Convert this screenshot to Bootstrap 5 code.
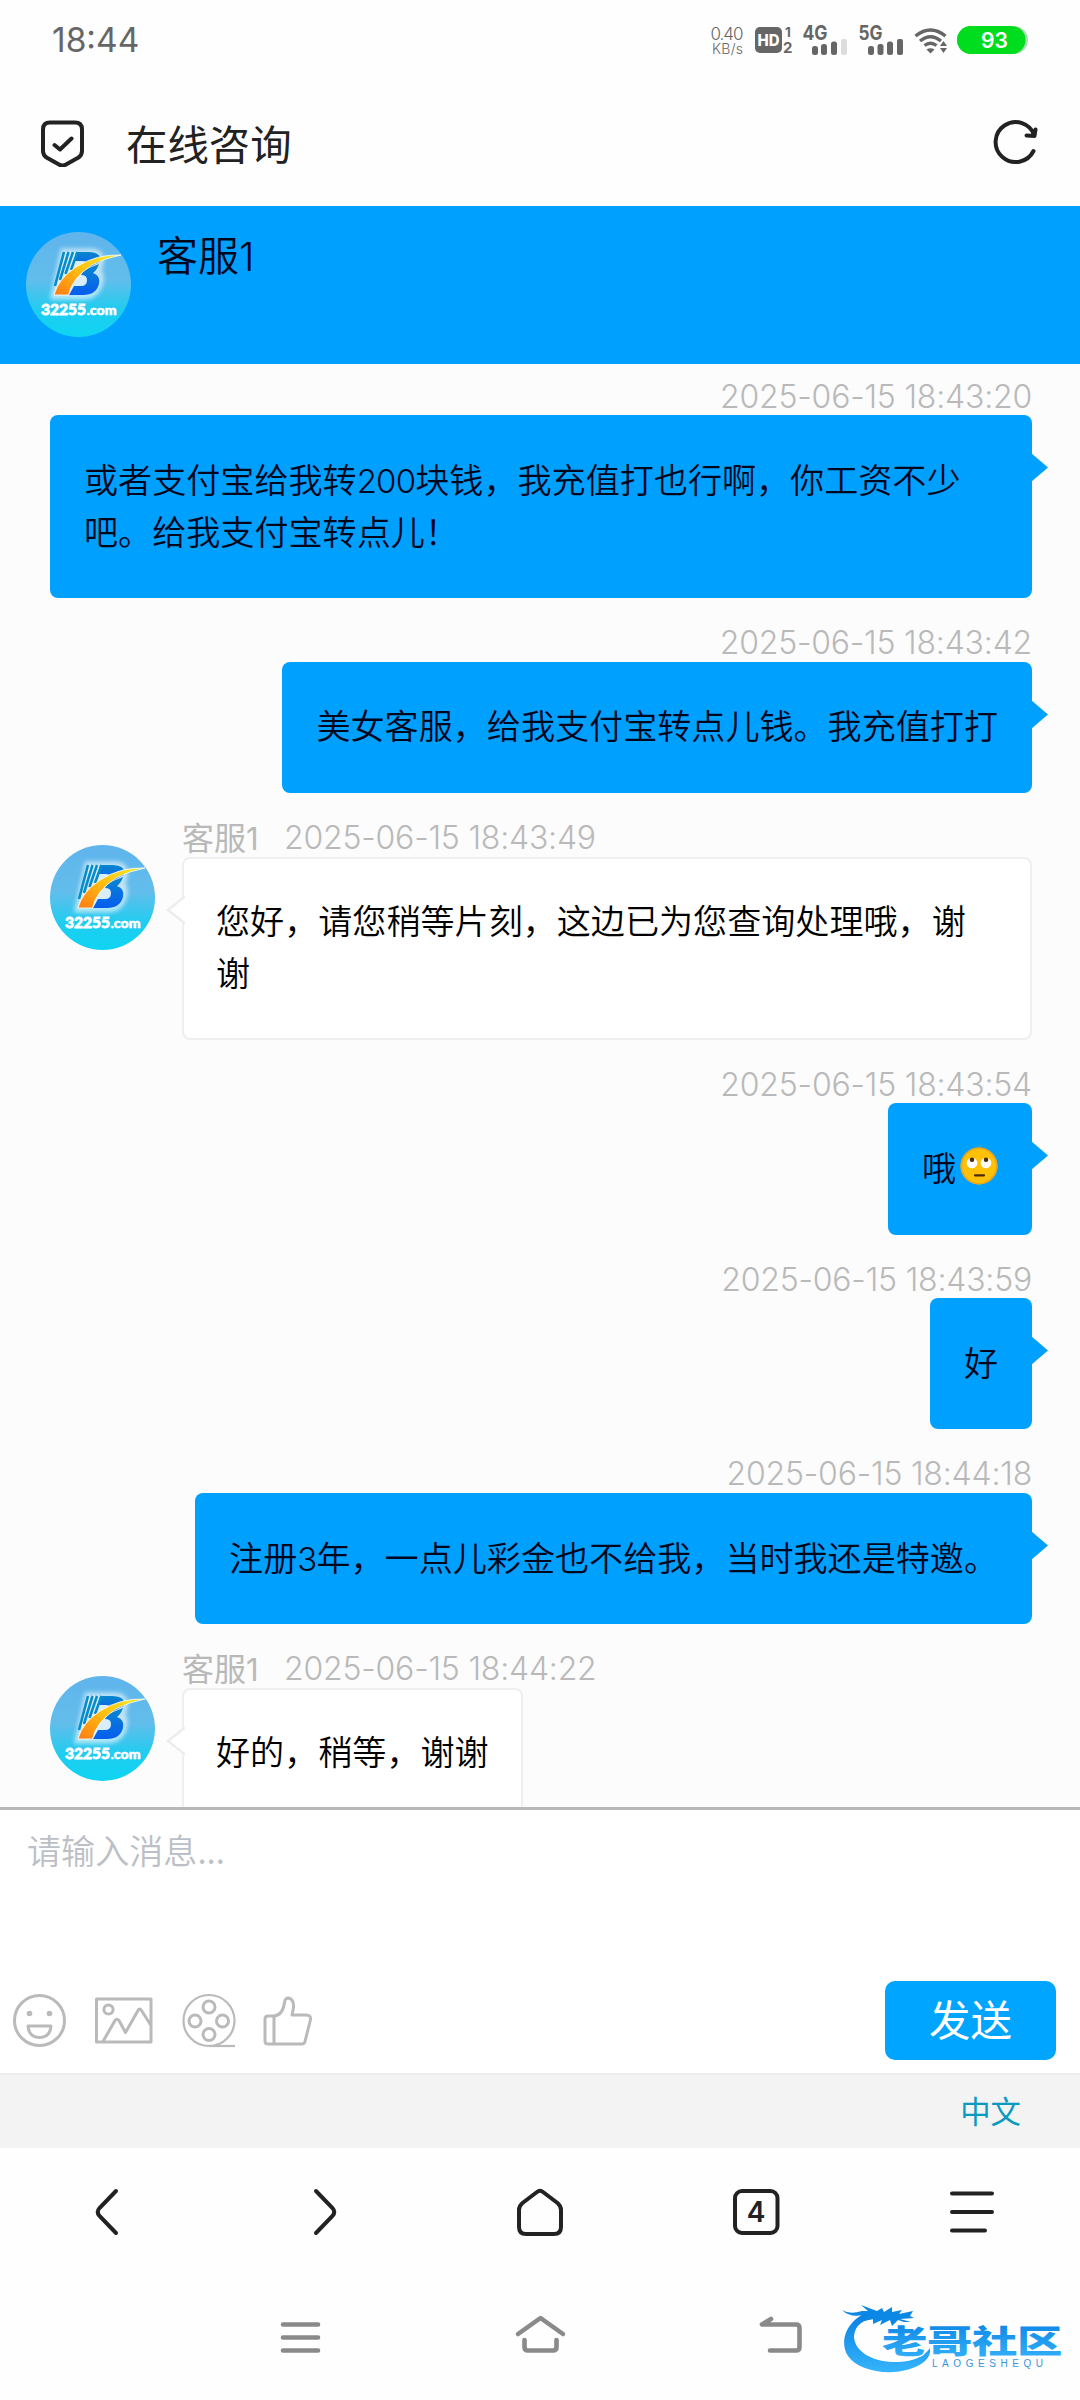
<!DOCTYPE html>
<html lang="zh-CN">
<head>
<meta charset="utf-8">
<meta name="viewport" content="width=device-width, initial-scale=1">
<title>在线咨询</title>
<link href="https://cdn.jsdelivr.net/npm/bootstrap@5.3.0/dist/css/bootstrap.min.css" rel="stylesheet">
<style>
  body{font-family:"Noto Sans CJK SC",sans-serif;color:#000;background:#fefefe;font-size:34.1px;line-height:52px;font-weight:350}
  .screen{width:1080px;height:2400px;overflow:hidden}
  svg{display:block;flex:none}
  .status{height:80px;padding:0 52px 0 52px;color:#666}
  .clock{font:400 33.5px/40px Inter,sans-serif}
  .titlebar{height:126px;padding:0 41px 2px 40px;color:#222}
  .titlebar .page-name{font-size:41.4px;font-weight:400;margin-left:41px;margin-top:-1px}
  .agent{height:158px;background:#00a0ff;padding:26px}
  .agent .agent-name{font-size:41px;line-height:43px;margin-left:26px;color:#00061c}
  .agent-name .num{font-size:39px}
  .chat{height:1443px;background:#fcfcfc;overflow:hidden}
  .meta{height:63.6px;color:#b9b9b9;font-size:32px;line-height:38px;padding-top:26px}
  .meta.first{height:51px;padding-top:14px}
  .stamp{font-family:Inter,"Noto Sans CJK SC",sans-serif;font-size:32px;font-weight:350;letter-spacing:-.2px}
  .meta .agent-tag{margin-top:-2px;width:102px;font-weight:400}
  .agent-tag .num{font-size:31px}
  .msg-out{padding-right:48px}
  .msg-in{padding:0 48px 0 50px}
  .bubble{position:relative;border-radius:8px;padding:36.600px 34px 42.600px;white-space:nowrap}
  .bubble-wide{width:982px}
  .bubble-out{background:#00a0ff;color:#00061c}
  .bubble-in{background:#fff;border:2px solid #efefef;padding:34.600px 32px 40.600px}
  .tail{position:absolute;top:38px}
  .bubble-out .tail{left:100%;margin-left:-1px}
  .bubble-in .tail{right:100%;margin-right:-1px;top:36px}
  .num{font-family:Inter,sans-serif;font-size:33px;line-height:1;letter-spacing:-.8px}
  .face-pic{margin-top:52px;margin-right:27px}
  .composer{height:266px;background:#fff;border-top:3px solid #b7b7b7}
  .composer .hint{color:#bcbfc6;padding:13px 27px 0;height:171px}
  .tools{height:79px;padding:0 24px 0 13px}
  .send{width:171px;height:79px;background:#00a5ff;border:0;border-radius:10px;color:#fff;font-size:41.5px;line-height:74px;padding:0 0 5px;font-weight:400}
  .lang{height:75px;background:#f3f3f3;color:#0a9ac0;font-size:30.4px;padding:0 59px 4px 0;border-top:2px solid #ececec;font-weight:400}
  .browser-nav{height:127px}
  .browser-nav>div{width:216px}
  .sys-nav{height:125px;position:relative}
  .brand{position:absolute;left:836px;top:21px}
</style>
</head>
<body>
<svg width="0" height="0" class="position-absolute">
  <defs>
    <linearGradient id="sky" x1="0" y1="0" x2="0" y2="1"><stop offset="0" stop-color="#5fb4ec"/><stop offset=".45" stop-color="#62bdeb"/><stop offset=".75" stop-color="#1ecdf0"/><stop offset="1" stop-color="#0fd4f2"/></linearGradient>
    <linearGradient id="flame" x1="1" y1="0" x2="0" y2="1"><stop offset="0" stop-color="#f2ee2a"/><stop offset=".45" stop-color="#ffc411"/><stop offset="1" stop-color="#ff7a12"/></linearGradient>
    <linearGradient id="bee" x1="0" y1="0" x2="0" y2="1"><stop offset="0" stop-color="#0a86cf"/><stop offset="1" stop-color="#065df0"/></linearGradient>
    <linearGradient id="wave" x1="0" y1="0" x2="0" y2="1"><stop offset="0" stop-color="#087fe2"/><stop offset="1" stop-color="#35b4fb"/></linearGradient>
    <filter id="glow" x="-30%" y="-30%" width="160%" height="160%"><feGaussianBlur stdDeviation="2.2"/></filter>
    <symbol id="logo" viewBox="0 0 105 105">
      <circle cx="52.500" cy="52.500" r="52.500" fill="url(#sky)"/>
      <path d="M37 19h28q12 0 10 12l-2 8q4 6 1 14-4 12-16 12H27z" fill="#fff" stroke="#fff" stroke-width="5" opacity=".6" filter="url(#glow)"/>
      <path d="M37 20h24q13 0 12 9-1 9-7 12 7 3 5 11-3 11-15 11H28z" fill="#d8eefb"/>
      <path d="M50 20h12q14 0 12 10l-12 6q1-7-6-7H48z" fill="url(#bee)"/>
      <path d="M63 36l10-4q-2 6-6 9 8 3 6 11-3 11-16 11H43l5-9h7q6 0 6-6 0-5-6-5l3-5z" fill="url(#bee)"/>
      <g stroke="#078bc9" stroke-width="2.600"><path d="M38 20L29 54M42.500 20L34 48M47 20L39.500 42M51.500 20L45 38"/></g>
      <path d="M95 23Q70 22 50 35 32 47 28 63H42.500Q46 46 66 33 79 26 95 23z" fill="url(#flame)" stroke="#fff" stroke-width=".8"/>
      <text x="15" y="83" font-family="Lato" font-weight="900" font-size="15.500" fill="#fff" stroke="#fff" stroke-width=".8" textLength="45" lengthAdjust="spacingAndGlyphs">32255</text>
      <text x="60.500" y="83" font-family="Lato" font-weight="900" font-size="13" fill="#fff" stroke="#fff" stroke-width=".5" textLength="30" lengthAdjust="spacingAndGlyphs">.com</text>
    </symbol>
    <symbol id="tail-out" viewBox="0 0 17 30"><path d="M0 0L17 14.500 0 29z" fill="#00a0ff"/></symbol>
    <symbol id="tail-in" viewBox="0 0 20 30"><path d="M20 1.500L3 15 20 28.500" fill="#fff" stroke="#ededed" stroke-width="2.500"/></symbol>
  </defs>
</svg>

<div class="screen d-flex flex-column">
  <div class="status d-flex align-items-center justify-content-between">
    <span class="clock">18:44</span>
    <svg width="320" height="40" viewBox="708 20 320 40" fill="#666" font-family="Inter,sans-serif">
      <text x="710.500" y="40" font-size="17" textLength="33">0.40</text>
      <text x="712" y="54" font-size="14" textLength="31">KB/s</text>
      <rect x="755" y="27" width="27" height="26" rx="5"/>
      <text x="757.500" y="46" font-size="16" font-weight="800" fill="#fff" textLength="22" lengthAdjust="spacingAndGlyphs">HD</text>
      <text x="785" y="37" font-size="13.500" font-weight="700">1</text>
      <text x="783" y="52.500" font-size="15" font-weight="700">2</text>
      <text x="802.500" y="39.500" font-size="20" font-weight="700" textLength="25" lengthAdjust="spacingAndGlyphs">4G</text>
      <text x="858.500" y="39.500" font-size="20" font-weight="700" textLength="24" lengthAdjust="spacingAndGlyphs">5G</text>
      <rect x="812" y="46" width="6" height="9" rx="2.500"/><rect x="821" y="44" width="6" height="11" rx="2.500"/><rect x="831" y="41.500" width="6" height="13.500" rx="2.500"/><rect x="841" y="39" width="6" height="16" rx="2" fill="#ddd"/>
      <rect x="868" y="46" width="6" height="9" rx="2.500"/><rect x="877.500" y="44" width="6" height="11" rx="2.500"/><rect x="887" y="41.500" width="6" height="13.500" rx="2.500"/><rect x="897" y="39" width="6" height="16" rx="2"/>
      <g fill="none" stroke="#666" stroke-width="3.400"><path d="M915.500 36Q930.500 24 945.500 36M920 41Q930.500 32.500 941 41M924.500 45.500Q930.500 41 936.500 45.500"/></g>
      <path d="M926.500 49.500q4-2.500 8 0l-4 4zM943.500 41l3.500 5h-7zM943.500 53l3.500-5h-7z"/>
      <rect x="957" y="26" width="71" height="28" rx="14" fill="#a9dcae"/><rect x="957" y="26" width="68.500" height="28" rx="14" fill="#00dc1e"/>
      <text x="981" y="47.500" font-size="21" font-weight="600" fill="#fff" textLength="27" lengthAdjust="spacingAndGlyphs">93</text>
    </svg>
  </div>

  <div class="titlebar d-flex align-items-center">
    <svg width="45" height="50" viewBox="40 117 45 50" fill="none" stroke="#222" stroke-width="4" stroke-linecap="round" stroke-linejoin="round"><path d="M50 122.500H75Q82 122.500 82 129.500V151Q82 155 78.500 157.500L66 164.500Q62.500 166.500 59 164.500L46.500 157.500Q43 155 43 151V129.500Q43 122.500 50 122.500zM54.500 145L60 149.500 71.500 138.500"/></svg>
    <span class="page-name">在线咨询</span>
    <svg class="ms-auto" width="48" height="48" viewBox="991 118 48 48" fill="none" stroke="#222" stroke-width="4" stroke-linecap="round" stroke-linejoin="round"><path d="M1033.500 151A20 20 0 1 1 1034.500 135.500M1026.500 135.500L1034.500 136 1035.500 129.500"/></svg>
  </div>

  <div class="agent d-flex">
    <svg width="105" height="105"><use href="#logo"/></svg>
    <span class="agent-name">客服<span class="num">1</span></span>
  </div>

  <div class="chat">
    <div class="msg-out d-flex flex-column align-items-end">
      <div class="meta first stamp">2025-06-15 18:43:20</div>
      <div class="bubble bubble-out bubble-wide">或者支付宝给我转<span class="num">200</span>块钱，我充值打也行啊，你工资不少<br>吧。给我支付宝转点儿！<svg class="tail" width="17" height="30"><use href="#tail-out"/></svg></div>
    </div>
    <div class="msg-out d-flex flex-column align-items-end">
      <div class="meta stamp">2025-06-15 18:43:42</div>
      <div class="bubble bubble-out">美女客服，给我支付宝转点儿钱。我充值打打<svg class="tail" width="17" height="30"><use href="#tail-out"/></svg></div>
    </div>
    <div class="msg-in d-flex">
      <svg class="face-pic" width="105" height="105"><use href="#logo"/></svg>
      <div class="flex-grow-1 d-flex flex-column align-items-start">
        <div class="meta d-flex"><span class="agent-tag">客服<span class="num">1</span></span><span class="stamp">2025-06-15 18:43:49</span></div>
        <div class="bubble bubble-in w-100">您好，请您稍等片刻，这边已为您查询处理哦，谢<br>谢<svg class="tail" width="20" height="30"><use href="#tail-in"/></svg></div>
      </div>
    </div>
    <div class="msg-out d-flex flex-column align-items-end">
      <div class="meta stamp">2025-06-15 18:43:54</div>
      <div class="bubble bubble-out d-flex align-items-center">哦<svg class="ms-1" width="38" height="38" viewBox="0 0 38 38" role="img" aria-label="🙄"><circle cx="19" cy="19" r="18.500" fill="#ffc107"/><circle cx="19" cy="19" r="17.700" fill="none" stroke="#eda21b" stroke-width="1.600"/><circle cx="12" cy="16" r="5.300" fill="#fff"/><circle cx="26" cy="16" r="5.300" fill="#fff"/><circle cx="12" cy="12.800" r="2.300" fill="#4b2b10"/><circle cx="26" cy="12.800" r="2.300" fill="#4b2b10"/><path d="M15 28.300H24" stroke="#4b2b10" stroke-width="2.200" stroke-linecap="round"/></svg><svg class="tail" width="17" height="30"><use href="#tail-out"/></svg></div>
    </div>
    <div class="msg-out d-flex flex-column align-items-end">
      <div class="meta stamp">2025-06-15 18:43:59</div>
      <div class="bubble bubble-out">好<svg class="tail" width="17" height="30"><use href="#tail-out"/></svg></div>
    </div>
    <div class="msg-out d-flex flex-column align-items-end">
      <div class="meta stamp">2025-06-15 18:44:18</div>
      <div class="bubble bubble-out">注册<span class="num">3</span>年，一点儿彩金也不给我，当时我还是特邀。<svg class="tail" width="17" height="30"><use href="#tail-out"/></svg></div>
    </div>
    <div class="msg-in d-flex">
      <svg class="face-pic" width="105" height="105"><use href="#logo"/></svg>
      <div class="flex-grow-1 d-flex flex-column align-items-start">
        <div class="meta d-flex"><span class="agent-tag">客服<span class="num">1</span></span><span class="stamp">2025-06-15 18:44:22</span></div>
        <div class="bubble bubble-in">好的，稍等，谢谢<svg class="tail" width="20" height="30"><use href="#tail-in"/></svg></div>
      </div>
    </div>
  </div>

  <div class="composer">
    <div class="hint">请输入消息...</div>
    <div class="tools d-flex align-items-center">
      <svg width="302" height="56" viewBox="13 1992.500 302 56" fill="none" stroke="#bababa" stroke-width="3" stroke-linejoin="round">
        <circle cx="39.500" cy="2020" r="25"/><circle cx="29.500" cy="2013" r="2.800" fill="#bababa" stroke="none"/><circle cx="49.500" cy="2013" r="2.800" fill="#bababa" stroke="none"/><path d="M28 2025.500H51Q50 2037 39.500 2037T28 2025.500z"/>
        <path d="M96.500 1998.500H151V2041.500H96.500zM103 2041L115 2020Q117 2017.500 119 2020L125.500 2032 138 2010Q139.500 2007 141.500 2010L151 2025"/><circle cx="108.500" cy="2009" r="4.600"/>
        <circle cx="209" cy="2020" r="25.500" stroke-width="2.200"/><circle cx="209" cy="2006.500" r="6"/><circle cx="195" cy="2020.500" r="6"/><circle cx="222.500" cy="2020.500" r="6"/><circle cx="209" cy="2034" r="6"/><path d="M209 2045.500H235" stroke-width="2.200"/>
        <path d="M268 2015.500H274Q283 2014.500 284.500 2002 285 1997.500 288.500 1997.500 294 1998.500 293.500 2007L292 2014.500H306Q311 2014.500 310.500 2019L305 2041Q304.500 2043.500 302 2043.500H268Q265 2043.500 265 2040.500V2018.500Q265 2015.500 268 2015.500zM274 2015.500V2043.500"/>
      </svg>
      <button class="btn send ms-auto">发送</button>
    </div>
  </div>
  <div class="lang d-flex align-items-center justify-content-end">中文</div>

  <div class="browser-nav d-flex align-items-center">
    <div class="d-flex justify-content-center"><svg width="30" height="50" viewBox="93 2186 30 50" fill="none" stroke="#222" stroke-width="4" stroke-linecap="round"><path d="M116 2190L99.500 2207Q96 2211 99.500 2215L116 2232"/></svg></div>
    <div class="d-flex justify-content-center"><svg width="30" height="50" viewBox="309 2186 30 50" fill="none" stroke="#222" stroke-width="4" stroke-linecap="round"><path d="M316 2190L332.500 2207Q336 2211 332.500 2215L316 2232"/></svg></div>
    <div class="d-flex justify-content-center"><svg width="50" height="50" viewBox="515 2186 50 50" fill="none" stroke="#222" stroke-width="4" stroke-linejoin="round"><path d="M537 2191Q540 2188.500 543 2191L557.500 2202Q561 2205 561 2209V2226Q561 2233 554 2233H526Q519 2233 519 2226V2209Q519 2205 522.500 2202z"/></svg></div>
    <div class="d-flex justify-content-center"><svg width="50" height="50" viewBox="731 2186 50 50"><rect x="735" y="2190" width="42.500" height="42" rx="7" fill="none" stroke="#222" stroke-width="4"/><text x="756" y="2221" text-anchor="middle" font-family="Inter,sans-serif" font-size="28" font-weight="600" fill="#222">4</text></svg></div>
    <div class="d-flex justify-content-center"><svg width="50" height="50" viewBox="947 2186 50 50" stroke="#222" stroke-width="4" stroke-linecap="round"><path d="M952 2192.500H992M952 2211H992M952 2229.500H985"/></svg></div>
  </div>

  <div class="sys-nav">
    <svg width="820" height="125" viewBox="0 2275 820 125" fill="none" stroke="#8a8a8a" stroke-width="4.600" stroke-linecap="round" stroke-linejoin="round">
      <path d="M283 2324.500H318M283 2337.500H318M283 2350.500H318"/>
      <path d="M518 2334L540.500 2318 563 2334M524.500 2340V2347Q524.500 2350.500 528 2350.500H553Q556.500 2350.500 556.500 2347V2340"/>
      <path d="M771 2319L762 2324.500H796Q799.500 2324.500 799.500 2328V2347Q799.500 2350.500 796 2350.500H770"/>
    </svg>
    <svg class="brand" width="232" height="84" viewBox="836 2296 232 84">
      <path d="M868 2312C846 2321 839 2341 848 2356 861 2375 905 2378 925 2361Q931 2356 930 2348 921 2361 899 2362C872 2363 854 2351 854 2336 855 2324 865 2318 878 2319z" fill="url(#wave)"/>
      <path d="M842 2310Q850 2315 862 2311L868 2311 861 2305 877 2311 882 2308 884 2312 892 2307 892 2312 902 2310 899 2314 913 2311 910 2316 914 2318 900 2319 911 2322 904 2322 898 2320 892 2326 890 2320 880 2325 882 2320 873 2324 873 2319 864 2321 868 2314Q851 2319 842 2310z" fill="#0b87e6"/>
      <text transform="translate(882 2353) scale(1.42 1)" font-family="Noto Sans CJK SC" font-weight="900" font-size="32" textLength="127" fill="url(#wave)" stroke="#fff" stroke-width="2" paint-order="stroke">老哥社区</text>
      <text x="932" y="2366.500" font-family="Liberation Sans" font-size="10" textLength="111" fill="#3795dc">LAOGESHEQU</text>
    </svg>
  </div>
</div>
<script src="https://cdn.jsdelivr.net/npm/bootstrap@5.3.0/dist/js/bootstrap.bundle.min.js"></script>
</body>
</html>
